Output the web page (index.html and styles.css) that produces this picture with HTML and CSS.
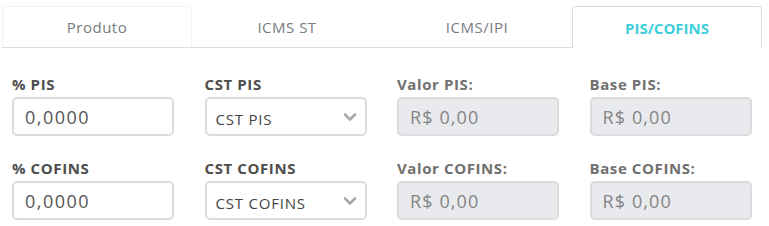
FILE: index.html
```html
<!DOCTYPE html>
<html lang="pt-BR">
<head>
<meta charset="utf-8">
<title>PIS/COFINS</title>
<link rel="stylesheet" href="styles.css">
</head>
<body>
<div class="tabs">
  <div class="tab tab-faint">Produto</div>
  <div class="tab">ICMS ST</div>
  <div class="tab">ICMS/IPI</div>
  <div class="tab active">PIS/COFINS</div>
</div>
<div class="form">
  <div class="field">
    <label>% PIS</label>
    <div class="input">0,0000</div>
  </div>
  <div class="field">
    <label>CST PIS</label>
    <div class="input select"><span>CST PIS</span><svg class="chev" viewBox="0 0 14 10" width="14" height="10"><path d="M2 2.5 L7 7.5 L12 2.5" fill="none" stroke="#a9a9a9" stroke-width="2.6" stroke-linecap="round" stroke-linejoin="round"/></svg></div>
  </div>
  <div class="field">
    <label class="muted">Valor PIS:</label>
    <div class="input disabled">R$ 0,00</div>
  </div>
  <div class="field">
    <label class="muted">Base PIS:</label>
    <div class="input disabled">R$ 0,00</div>
  </div>
  <div class="field">
    <label>% COFINS</label>
    <div class="input">0,0000</div>
  </div>
  <div class="field">
    <label>CST COFINS</label>
    <div class="input select"><span>CST COFINS</span><svg class="chev" viewBox="0 0 14 10" width="14" height="10"><path d="M2 2.5 L7 7.5 L12 2.5" fill="none" stroke="#a9a9a9" stroke-width="2.6" stroke-linecap="round" stroke-linejoin="round"/></svg></div>
  </div>
  <div class="field">
    <label class="muted">Valor COFINS:</label>
    <div class="input disabled">R$ 0,00</div>
  </div>
  <div class="field">
    <label class="muted">Base COFINS:</label>
    <div class="input disabled">R$ 0,00</div>
  </div>
</div>
</body>
</html>
```

FILE: styles.css
```css
html, body {
  margin: 0;
  padding: 0;
  background: #ffffff;
}
body {
  font-family: "Open Sans", "DejaVu Sans", sans-serif;
  color: #555;
}
.tabs {
  display: flex;
  margin: 6px 7px 0 2px;
  border-bottom: 1px solid #dcdcdc;
}
.tab {
  flex: 1;
  height: 40px;
  display: flex;
  align-items: center;
  justify-content: center;
  font-size: 15px;
  letter-spacing: 0.5px;
  color: #777c80;
  border: 1px solid transparent;
  border-bottom: none;
  border-radius: 4px 4px 0 0;
  margin-bottom: -1px;
  background: #fff;
}
.tab-faint {
  border-color: #f3f3f3;
}
.tab.active {
  border-color: #dcdcdc;
  color: #3fcfdc;
  font-weight: 700;
  letter-spacing: 0;
  height: 41px;
}
.form {
  display: grid;
  grid-template-columns: repeat(4, 162px);
  column-gap: 30.5px;
  row-gap: 24px;
  padding: 28px 0 0 12px;
}
.field {
  display: flex;
  flex-direction: column;
}
label {
  font-size: 15px;
  font-weight: 700;
  letter-spacing: 0.6px;
  line-height: 17px;
  color: #4d4d4d;
  margin-bottom: 4px;
}
label.muted {
  color: #707070;
}
.input {
  box-sizing: border-box;
  height: 39px;
  border: 2px solid #dcdcdc;
  border-radius: 5px;
  background: #fff;
  padding: 0 11px;
  display: flex;
  align-items: center;
  font-size: 18px;
  letter-spacing: 1.5px;
  color: #555;
}
.input.select {
  font-size: 15px;
  letter-spacing: 0.8px;
  color: #444;
  padding: 4px 8px 0 9px;
  justify-content: space-between;
}
.chev {
  margin-top: -4px;
}
.input.disabled {
  background: #e8eaed;
  color: #858585;
  letter-spacing: 1.1px;
}
```
